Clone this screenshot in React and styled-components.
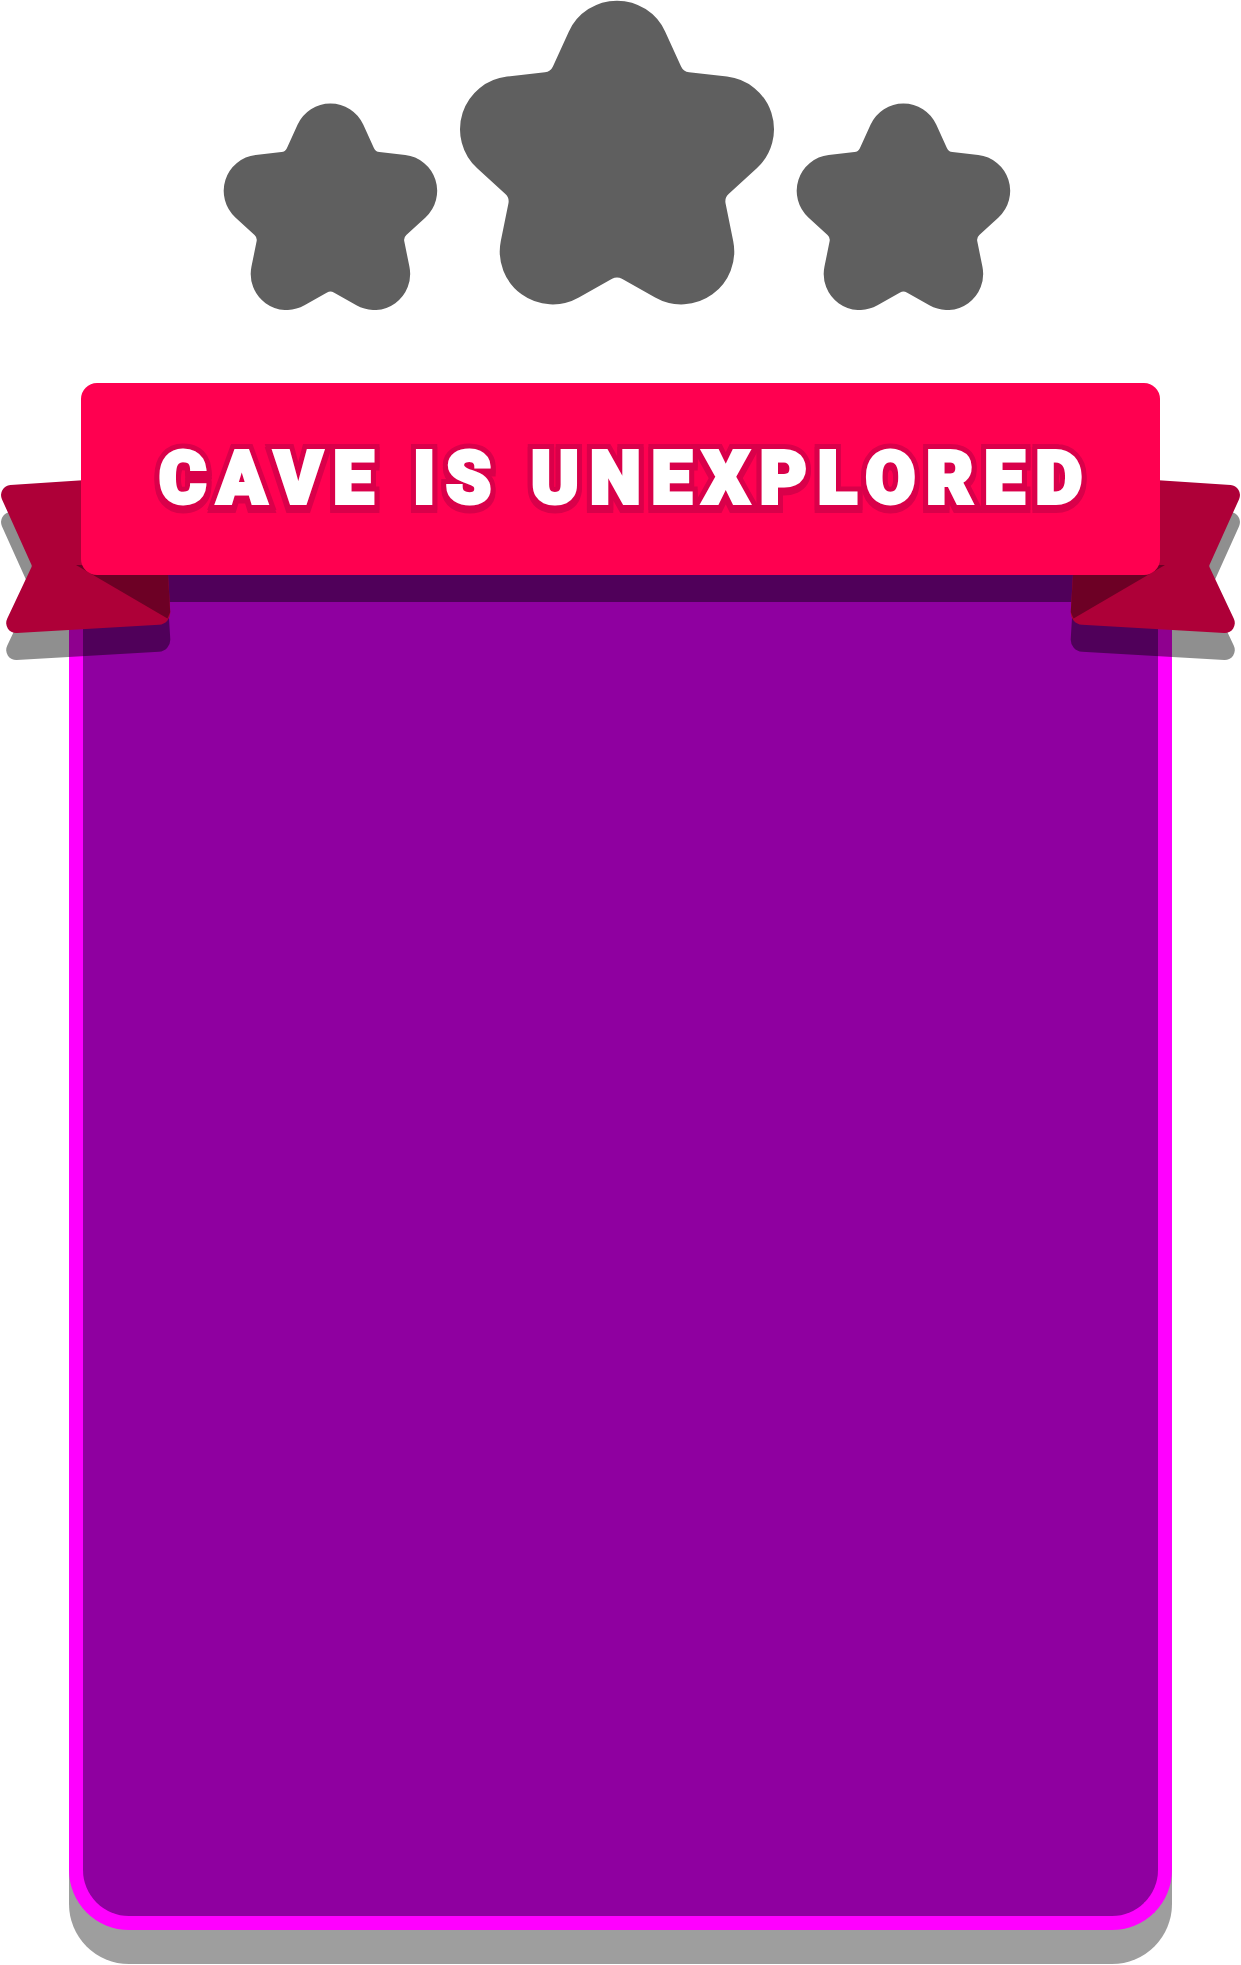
import styled, { createGlobalStyle } from "styled-components";

const GlobalStyle = createGlobalStyle`
    body {
        margin: 0;
        background: #ffffff;
        font-family: Roboto, "Liberation Sans", sans-serif;
    }
`

// builds a closed path with a circular fillet on every corner: [x, y, radius]
const roundedPath = (pts) => {
    const n = pts.length;
    let d = "";
    pts.forEach((v, i) => {
        const p = pts[(i - 1 + n) % n];
        const nx = pts[(i + 1) % n];
        const r = v[2];
        const a1 = [p[0] - v[0], p[1] - v[1]];
        const a2 = [nx[0] - v[0], nx[1] - v[1]];
        const l1 = Math.hypot(a1[0], a1[1]);
        const l2 = Math.hypot(a2[0], a2[1]);
        const u1 = [a1[0] / l1, a1[1] / l1];
        const u2 = [a2[0] / l2, a2[1] / l2];
        const ang = Math.acos(Math.max(-1, Math.min(1, u1[0] * u2[0] + u1[1] * u2[1])));
        const t = r === 0 ? 0 : r / Math.tan(ang / 2);
        const A = [v[0] + u1[0] * t, v[1] + u1[1] * t];
        const B = [v[0] + u2[0] * t, v[1] + u2[1] * t];
        const cross = -a1[0] * a2[1] + a1[1] * a2[0];
        const sweep = cross > 0 ? 1 : 0;
        d += `${i === 0 ? "M" : "L"}${A[0].toFixed(2)} ${A[1].toFixed(2)} `;
        d += `A${r} ${r} 0 0 ${sweep} ${B[0].toFixed(2)} ${B[1].toFixed(2)} `;
    });
    return d + "Z";
}

const starPoints = () => {
    const pts = [];
    for (let i = 0; i < 10; i++) {
        const a = (-90 + i * 36) * Math.PI / 180;
        const outer = i % 2 === 0;
        const rad = outer ? 237 : 113;
        pts.push([rad * Math.cos(a), rad * Math.sin(a), outer ? 53 : 10]);
    }
    return pts;
}

const STAR = roundedPath(starPoints());

const tailShape = roundedPath([
    [-4, 486, 10],
    [162, 475, 0],
    [171, 624, 12],
    [0, 634, 10],
    [32, 566, 3],
]);

const foldShape = "M76 565 L167.4 565 L170.2 612 L167.5 618.5 Z";

const Page = styled.div`
    position: relative;
    width: 1241px;
    padding-bottom: 35px;
    overflow: hidden;
    display: flex;
    flex-direction: column;
    align-items: center;
`

const StarRow = styled.div`
    display: flex;
    align-items: flex-start;
    justify-content: center;
    gap: 21px;
    padding-right: 7px;
`

const StarSvg = styled.svg`
    display: block;
    flex-shrink: 0;
    margin-top: ${(p) => p.$offset}px;
`

const Board = styled.div`
    position: relative;
    width: 100%;
    margin-top: 73px;
    display: flex;
    flex-direction: column;
    align-items: center;
`

const TailSvg = styled.svg`
    position: absolute;
    top: 87px;
    ${(p) => (p.$right ? "right: -6px; transform: scaleX(-1);" : "left: -6px;")}
    z-index: 1;
    overflow: visible;
`

const Banner = styled.div`
    position: relative;
    z-index: 2;
    box-sizing: border-box;
    width: 1079px;
    height: 192px;
    border-radius: 16px;
    background: #ff0050;
    display: flex;
    align-items: center;
    justify-content: center;
`

const Title = styled.h1`
    position: relative;
    margin: 0;
    padding-left: 11px;
    font-family: Roboto, "Liberation Sans", sans-serif;
    font-weight: 900;
    font-size: 72px;
    line-height: 1;
    letter-spacing: 11px;
    color: #ffffff;
    -webkit-text-stroke: 4px #ffffff;
    white-space: nowrap;

    &::before,
    &::after {
        content: attr(data-text);
        position: absolute;
        left: 0;
        top: 0;
        padding-left: 11px;
        z-index: -1;
        color: #d9004a;
        -webkit-text-stroke: 14px #d9004a;
    }

    &::after {
        top: 3px;
    }
`

const Card = styled.div`
    box-sizing: border-box;
    width: 1103px;
    height: 1355px;
    background: #8f00a0;
    border: 14px solid #ff00ff;
    border-top: 0;
    border-radius: 0 0 60px 60px;
    box-shadow: inset 0 27px 0 rgba(0, 0, 0, 0.44), 0 34px 0 #9e9e9e;
`

const Star = ({ scale = 1, offset = 0 }) => (
    <StarSvg
        $offset={offset}
        width={316 * scale}
        height={305 * scale}
        viewBox="-158 -163 316 305"
    >
        <path d={STAR} fill="#5f5f5f" />
    </StarSvg>
)

const Tail = ({ right }) => (
    <TailSvg $right={right} width="185" height="200" viewBox="-6 470 185 200">
        <path d={tailShape} fill="rgba(0, 0, 0, 0.44)" transform="translate(0 27)" />
        <path d={tailShape} fill="#ae0038" />
        <path d={foldShape} fill="#6d0025" />
    </TailSvg>
)

const App = () => {
    const title = "CAVE IS UNEXPLORED";

    return <>
        <GlobalStyle />
        <Page>
            <StarRow>
                <Star scale={0.68} offset={103} />
                <Star />
                <Star scale={0.68} offset={103} />
            </StarRow>
            <Board>
                <Tail />
                <Tail right />
                <Banner>
                    <Title data-text={title}>{title}</Title>
                </Banner>
                <Card />
            </Board>
        </Page>
    </>
}

export default App;
